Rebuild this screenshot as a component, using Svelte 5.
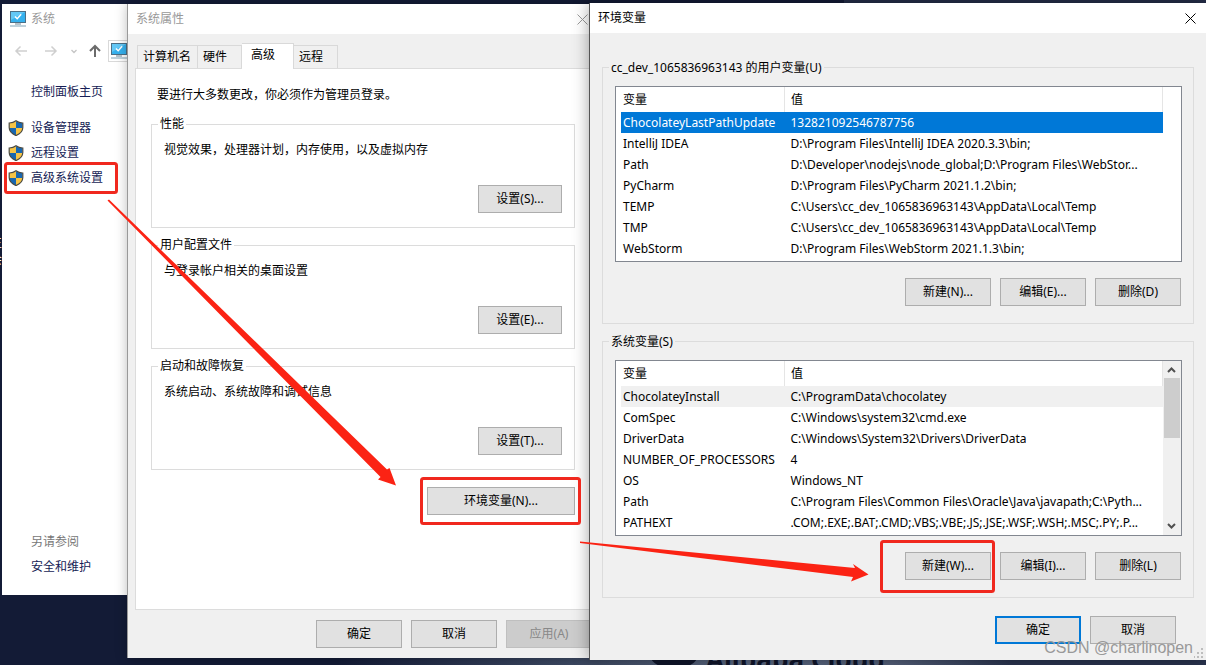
<script>
  let selectedUser = 0;
  let selectedSystem = 0;

  const userVars = [
    ["ChocolateyLastPathUpdate", "132821092546787756"],
    ["IntelliJ IDEA", "D:\\Program Files\\IntelliJ IDEA 2020.3.3\\bin;"],
    ["Path", "D:\\Developer\\nodejs\\node_global;D:\\Program Files\\WebStor..."],
    ["PyCharm", "D:\\Program Files\\PyCharm 2021.1.2\\bin;"],
    ["TEMP", "C:\\Users\\cc_dev_1065836963143\\AppData\\Local\\Temp"],
    ["TMP", "C:\\Users\\cc_dev_1065836963143\\AppData\\Local\\Temp"],
    ["WebStorm", "D:\\Program Files\\WebStorm 2021.1.3\\bin;"]
  ];

  const systemVars = [
    ["ChocolateyInstall", "C:\\ProgramData\\chocolatey"],
    ["ComSpec", "C:\\Windows\\system32\\cmd.exe"],
    ["DriverData", "C:\\Windows\\System32\\Drivers\\DriverData"],
    ["NUMBER_OF_PROCESSORS", "4"],
    ["OS", "Windows_NT"],
    ["Path", "C:\\Program Files\\Common Files\\Oracle\\Java\\javapath;C:\\Pyth..."],
    ["PATHEXT", ".COM;.EXE;.BAT;.CMD;.VBS;.VBE;.JS;.JSE;.WSF;.WSH;.MSC;.PY;.P..."]
  ];

  const sections = [
    { title: "性能", text: "视觉效果，处理器计划，内存使用，以及虚拟内存", button: "设置(S)..." },
    { title: "用户配置文件", text: "与登录帐户相关的桌面设置", button: "设置(E)..." },
    { title: "启动和故障恢复", text: "系统启动、系统故障和调试信息", button: "设置(T)..." }
  ];

  const tabs = ["计算机名", "硬件", "高级", "远程"];
  let activeTab = "高级";

  const links = ["设备管理器", "远程设置", "高级系统设置"];
</script>

{#snippet monitor()}
  <svg class="monitor" width="16" height="16" viewBox="0 0 16 16" aria-hidden="true">
    <rect x="0.5" y="0.5" width="15" height="11" fill="#35b1ee" stroke="#4d6f86" />
    <path d="M1 1h14L1 9z" fill="#63c8f6" />
    <path d="M5 5.500l2.200 2.200 4-4.400" fill="none" stroke="#fff" stroke-width="1.500" />
    <path d="M5 13h6" stroke="#6d8797" />
    <path d="M0 15h16" stroke="#7fa4b8" />
  </svg>
{/snippet}

{#snippet shield()}
  <svg width="16" height="16" viewBox="0 0 16 16" aria-hidden="true">
    <path d="M8 1c2 1.600 4.500 2 6.500 2v5H8zM1.500 8H8v7.500C4.500 14 1.500 11.500 1.500 8z" fill="#1767b1" />
    <path d="M8 1C6 2.600 3.500 3 1.500 3v5H8zM14.500 8c0 3.500-3 6-6.500 7.500V8z" fill="#f6c445" />
    <path d="M8 .8C6 2.400 3.500 3 1.200 3v4.500c0 4 3 6.500 6.800 8.100 3.800-1.600 6.800-4.100 6.800-8.100V3C12.500 3 10 2.400 8 .8z" fill="none" stroke="#4a4a42" stroke-width="1.200" />
  </svg>
{/snippet}

{#snippet varList(title, rows, selected, pick, scroll)}
  <div class="list">
    <table aria-label={title}>
      <thead>
        <tr><th class="name">变量</th><th>值</th></tr>
      </thead>
      <tbody>
        {#each rows as [name, value], i}
          <tr class:selected={i === selected && !scroll} class:inactive={i === selected && scroll} onclick={() => pick(i)}>
            <td>{name}</td>
            <td>{value}</td>
          </tr>
        {/each}
      </tbody>
    </table>
    <div class="gutter" class:scroll>
      {#if scroll}
        <svg width="17" height="17" viewBox="0 0 17 17" aria-hidden="true"><path d="M5 11l3.500-3.500L12 11" /></svg>
        <div class="thumb"></div>
        <svg width="17" height="17" viewBox="0 0 17 17" aria-hidden="true"><path d="M5 6l3.500 3.500L12 6" /></svg>
      {/if}
    </div>
  </div>
{/snippet}

<div class="desktop">
  <div class="edge-label">王<br />会</div>
  <div class="wallpaper">
    <svg width="50" height="30" viewBox="0 0 50 30" aria-hidden="true">
      <path d="M2 4q3 14 14 14h18q11 0 14-14" fill="none" stroke="#10162c" stroke-width="7" />
    </svg>
    <span>Alibaba Cloud</span>
  </div>

  <section class="window system">
    <header class="faded">{@render monitor()}<span>系统</span></header>
    <nav class="toolbar">
      <button aria-label="后退"><svg width="14" height="14" viewBox="0 0 14 14"><path d="M13 7H2M6.500 2.500L2 7l4.500 4.500" stroke="#cfcfcf" stroke-width="1.500" /></svg></button>
      <button aria-label="前进"><svg width="14" height="14" viewBox="0 0 14 14"><path d="M1 7h11M7.500 2.500L12 7l-4.500 4.500" stroke="#cfcfcf" stroke-width="1.500" /></svg></button>
      <button class="narrow" aria-label="最近"><svg width="6" height="14" viewBox="0 0 6 14"><path d="M.5 6L3 8.500 5.500 6" stroke="#c4c4c4" stroke-width="1.300" /></svg></button>
      <button aria-label="上移"><svg width="14" height="14" viewBox="0 0 14 14"><path d="M7 13V2M2 7l5-5 5 5" stroke="#6b6b6b" stroke-width="2" /></svg></button>
      <div class="address">{@render monitor()}</div>
    </nav>
    <div class="links">
      <a class="home" href="#home">控制面板主页</a>
      {#each links as link}
        <a href="#{link}">{@render shield()}<span>{link}</span></a>
      {/each}
    </div>
    <div class="see-also">
      <span>另请参阅</span>
      <a href="#security">安全和维护</a>
    </div>
  </section>

  <section class="window props">
    <header class="faded">
      <span>系统属性</span>
      <button class="close" aria-label="关闭"><svg width="11" height="11" viewBox="0 0 11 11"><path d="M.5.5l10 10M10.500.5l-10 10" /></svg></button>
    </header>
    <div class="tabs">
      {#each tabs as tab}
        <button class:active={tab === activeTab} onclick={() => (activeTab = tab)}>{tab}</button>
      {/each}
    </div>
    <div class="page">
      <p>要进行大多数更改，你必须作为管理员登录。</p>
      {#each sections as section}
        <fieldset>
          <legend>{section.title}</legend>
          <p>{section.text}</p>
          <button class="btn small">{section.button}</button>
        </fieldset>
      {/each}
      <button class="btn wide">环境变量(N)...</button>
    </div>
    <footer>
      <button class="btn">确定</button>
      <button class="btn">取消</button>
      <button class="btn" disabled>应用(A)</button>
    </footer>
  </section>

  <section class="window env">
    <header>
      <span>环境变量</span>
      <button class="close" aria-label="关闭"><svg width="11" height="11" viewBox="0 0 11 11"><path d="M.5.5l10 10M10.500.5l-10 10" /></svg></button>
    </header>
    <div class="groups">
      <fieldset>
        <legend>cc_dev_1065836963143 的用户变量(U)</legend>
        {@render varList("用户变量", userVars, selectedUser, (i) => (selectedUser = i), false)}
        <div class="actions">
          <button class="btn">新建(N)...</button>
          <button class="btn">编辑(E)...</button>
          <button class="btn">删除(D)</button>
        </div>
      </fieldset>
      <fieldset>
        <legend>系统变量(S)</legend>
        {@render varList("系统变量", systemVars, selectedSystem, (i) => (selectedSystem = i), true)}
        <div class="actions">
          <button class="btn">新建(W)...</button>
          <button class="btn">编辑(I)...</button>
          <button class="btn">删除(L)</button>
        </div>
      </fieldset>
    </div>
    <footer>
      <button class="btn default">确定</button>
      <button class="btn">取消</button>
    </footer>
    <svg class="grip" width="10" height="10" viewBox="0 0 10 10" aria-hidden="true">
      <path d="M7 0h2v2H7zM7 4h2v2H7zM7 8h2v2H7zM3 4h2v2H3zM3 8h2v2H3zM0 8h1v2H0z" fill="#bdbdbd" />
    </svg>
  </section>

  <!-- red marks that lead through the three steps -->
  <svg class="marks" aria-hidden="true">
    <rect x="5.500" y="163.500" width="111" height="29" rx="2" />
    <rect x="421.500" y="478.500" width="158" height="45" rx="2" />
    <rect x="881.500" y="541.500" width="112" height="50" rx="2" />
    <path d="M107.500 200.500L109 199.500 387 469.500 389.500 468 396 485.500 378 479.500 380.500 477z" />
    <path d="M580 541.500L855 568 853 564 868.500 574.500 851 581.500 853 577 580 543z" />
  </svg>
  <div class="watermark">CSDN @charlinopen</div>
</div>

<style>
  :global(body) {
    background: #131b36;
  }

  .desktop {
    position: relative;
    height: 100vh;
    overflow: hidden;
    background: linear-gradient(90deg, #131b36 0%, #131b36 28%, #39455f 46%, #5d6a84 62%, #55617b 74%, #2a3450 84%);
    font-family: "Noto Sans", "Noto Sans CJK SC", sans-serif;
    font-size: 12px;
    line-height: 16px;
    color: #000;
  }

  .desktop::before {
    content: "";
    display: block;
    height: 600px;
    background: linear-gradient(90deg, #131b36 70%, #252e49 70%);
  }

  .edge-label {
    position: absolute;
    top: 236px;
    left: -10px;
    color: #fff;
  }

  .wallpaper {
    position: absolute;
    top: 645px;
    left: 649px;
    display: flex;
    gap: 7px;
    font-family: "Open Sans", sans-serif;
    font-size: 26px;
    font-weight: 700;
    line-height: 28px;
    color: #10162c;
  }

  .window {
    position: absolute;
    box-sizing: border-box;
    display: flex;
    flex-direction: column;
    background: #f0f0f0;
  }

  .system {
    top: 4px;
    bottom: 70px;
    left: 2px;
    width: 140px;
    background: #fff;
  }

  .props {
    top: 4px;
    left: 128px;
    width: 470px;
    padding-bottom: 10px;
    box-shadow: -1px 0 0 #999, 0 0 12px rgba(0, 0, 0, 0.3);
  }

  .env {
    top: 3px;
    left: 590px;
    right: 0;
    padding-bottom: 16px;
    box-shadow: -1px 0 0 #555, 0 0 16px rgba(0, 0, 0, 0.4);
  }

  header {
    display: flex;
    align-items: center;
    height: 30px;
    padding: 0 10px 0 8px;
    background: #fff;
  }

  header.faded {
    color: #999;
  }

  header span {
    flex: 1;
  }

  header .monitor {
    margin-right: 5px;
  }

  button {
    margin: 0;
    padding: 0;
    border: 0;
    background: none;
    font: inherit;
    color: inherit;
  }

  svg path {
    fill: none;
  }

  svg path[fill] {
    fill: revert-layer;
  }

  .close svg {
    display: block;
    stroke: #000;
  }

  .faded .close svg {
    stroke: #999;
  }

  .toolbar {
    display: flex;
    align-items: center;
    gap: 16px;
    height: 34px;
    padding-left: 12px;
  }

  .toolbar button {
    height: 14px;
  }

  .toolbar svg {
    display: block;
  }

  .toolbar .narrow {
    margin: 0 -5px 0 -3px;
  }

  .address {
    flex: 1;
    margin-left: -10px;
    padding: 2px;
    border: 1px solid #d9d9d9;
  }

  .links {
    display: flex;
    flex-direction: column;
    gap: 9px;
    padding: 16px 0 0 6px;
  }

  a {
    display: flex;
    align-items: center;
    gap: 7px;
    color: #151c55;
    text-decoration: none;
  }

  .links .home {
    margin-bottom: 11px;
    padding-left: 23px;
  }

  .see-also {
    display: flex;
    flex-direction: column;
    gap: 9px;
    margin-top: auto;
    padding: 0 0 20px 29px;
    color: #777;
  }

  .tabs {
    display: flex;
    align-items: flex-end;
    height: 34px;
    padding-left: 9px;
  }

  .tabs button {
    height: 23px;
    padding: 0 14px 0 5px;
    border: 1px solid #d9d9d9;
    border-width: 1px 1px 0 0;
  }

  .tabs button:first-child {
    padding-right: 6px;
    border-left-width: 1px;
  }

  .tabs button.active {
    z-index: 1;
    height: 26px;
    margin-bottom: -1px;
    padding: 0 18px 3px 9px;
    background: #fff;
  }

  .page {
    display: flex;
    flex-direction: column;
    height: 542px;
    margin-left: 7px;
    padding: 18px 22px 0 15px;
    box-sizing: border-box;
    border: 1px solid #dcdcdc;
    background: #fff;
  }

  p {
    margin: 0;
  }

  .page > p {
    padding: 0 6px 13px;
  }

  fieldset {
    display: flex;
    flex-direction: column;
    min-width: 0;
    margin: 0;
    border: 1px solid #dcdcdc;
  }

  legend {
    padding: 0 2px;
  }

  .page fieldset {
    height: 112px;
    box-sizing: border-box;
    margin-bottom: 9px;
    padding: 10px 12px 0;
  }

  .page legend {
    margin-left: -6px;
  }

  .btn {
    width: 86px;
    height: 28px;
    border: 1px solid #adadad;
    background: #e1e1e1;
    text-align: center;
  }

  .btn:disabled {
    border-color: #bfbfbf;
    background: #ccc;
    color: #888;
  }

  .btn.default {
    border: 2px solid #0078d7;
  }

  .small {
    width: 84px;
    margin: 27px 0 0 auto;
  }

  .wide {
    width: 148px;
    margin: 8px 0 0 auto;
  }

  footer {
    display: flex;
    gap: 9px;
  }

  .props footer {
    padding: 10px 0 0 188px;
  }

  .env footer {
    justify-content: flex-end;
    padding: 18px 30px 0 0;
  }

  .groups {
    display: flex;
    flex-direction: column;
    gap: 8px;
    padding: 25px 12px 0;
  }

  .groups fieldset {
    padding: 10px 11px 17px 12px;
  }

  .groups legend {
    margin-left: -6px;
    padding-top: 2px;
  }

  .list {
    display: flex;
    padding: 0 0 2px 5px;
    border: 1px solid #828790;
    background: #fff;
  }

  table {
    flex: 1;
    min-width: 0;
    table-layout: fixed;
    border-collapse: collapse;
  }

  th,
  td {
    height: 21px;
    padding: 0 0 0 6px;
    overflow: hidden;
    text-align: left;
    font-weight: 400;
    white-space: nowrap;
  }

  th {
    height: 25px;
    border-right: 1px solid #e5e5e5;
  }

  th:first-child,
  td:first-child {
    padding-left: 2px;
  }

  .name {
    width: 161px;
  }

  .selected {
    background: #0078d7;
    color: #fff;
  }

  .inactive {
    background: #f0f0f0;
  }

  .gutter {
    width: 18px;
  }

  .scroll {
    display: flex;
    flex-direction: column;
    margin-bottom: -2px;
    background: #f0f0f0;
  }

  .gutter svg {
    stroke: #505050;
    stroke-width: 2;
  }

  .thumb {
    height: 60px;
    margin: 0 1px auto;
    background: #cdcdcd;
  }

  .actions {
    display: flex;
    justify-content: flex-end;
    gap: 9px;
    padding: 16px 1px 0 0;
  }

  .grip {
    position: absolute;
    right: 2px;
    bottom: 2px;
  }

  .marks {
    position: absolute;
    top: 0;
    left: 0;
    width: 100%;
    height: 100%;
    pointer-events: none;
  }

  .marks rect {
    fill: none;
    stroke: #f0281e;
    stroke-width: 3;
  }

  .marks path {
    fill: #fb2314;
  }

  .watermark {
    position: absolute;
    right: 13px;
    bottom: 7px;
    font-family: "Liberation Sans", sans-serif;
    font-size: 16px;
    line-height: 20px;
    color: #999;
    pointer-events: none;
  }
</style>
